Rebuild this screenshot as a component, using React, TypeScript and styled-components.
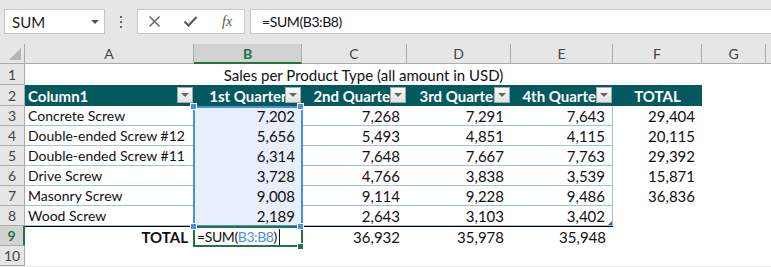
import React from 'react';
import styled, { createGlobalStyle } from 'styled-components';

const GREEN = '#217346';
const TEAL = '#03595d';
const TABLE_LINE = '#9bc2e6';
const SEL_BLUE = '#4a8fe2';

const COLS = [169, 108, 105, 104, 102, 89, 64];
const ROW_H = [21, 21, 20, 20, 20, 20, 20, 20, 20, 20];

const GlobalStyle = createGlobalStyle`
  html, body { margin: 0; padding: 0; background: #e6e6e6; }
  body { font-family: Lato, "Liberation Sans", sans-serif; overflow: hidden; }
`;

const Page = styled.div`
  width: 771px;
  height: 267px;
  background: #e6e6e6;
  overflow: hidden;
`;

const Toolbar = styled.div`
  display: flex;
  align-items: flex-start;
  height: 44px;
  padding: 9px 0 0 4px;
  box-sizing: border-box;
`;

const NameBox = styled.div`
  width: 101px;
  height: 25px;
  box-sizing: border-box;
  background: #fff;
  border: 1px solid #c6c6c6;
  display: flex;
  align-items: center;
  justify-content: space-between;
  padding: 0 5px 0 7px;
  font-size: 15px;
  color: #222;
`;

const Caret = styled.span`
  width: 0;
  height: 0;
  border-left: 4px solid transparent;
  border-right: 4px solid transparent;
  border-top: 4px solid #555;
`;

const Dots = styled.div`
  width: 32px;
  height: 25px;
  display: flex;
  flex-direction: column;
  align-items: center;
  justify-content: center;
  gap: 3px;
  span {
    width: 2px;
    height: 2px;
    background: #666;
  }
`;

const FxBox = styled.div`
  width: 108px;
  height: 25px;
  box-sizing: border-box;
  background: #fff;
  border: 1px solid #c6c6c6;
  display: flex;
  align-items: center;
  padding-left: 10px;
  gap: 22px;
`;

const FxGlyph = styled.span`
  font-family: "Liberation Serif", serif;
  font-style: italic;
  font-size: 14px;
  color: #555;
  margin-left: 2px;
`;

const FormulaText = styled.span`
  font-size: 14px;
  letter-spacing: -0.4px;
`;

const FormulaInput = styled.div`
  flex: 1;
  height: 25px;
  margin-left: 5px;
  box-sizing: border-box;
  background: #fff;
  border: 1px solid #c6c6c6;
  border-right: none;
  display: flex;
  align-items: center;
  padding-left: 11px;
  color: #111;
`;

const Sheet = styled.div`
  position: relative;
  display: grid;
  grid-template-columns: 25px ${COLS.map((c) => c + 'px').join(' ')} 1fr;
  grid-template-rows: 20px ${ROW_H.map((h) => h + 'px').join(' ')};
  background: #fff;
  font-size: 15px;
  color: #111;
`;

const Corner = styled.div`
  background: #e6e6e6;
  border-right: 1px solid #ababab;
  border-bottom: 1px solid #ababab;
  position: relative;
  &::after {
    content: '';
    position: absolute;
    right: 3px;
    bottom: 3px;
    border-left: 12px solid transparent;
    border-bottom: 12px solid #b4b4b4;
  }
`;

const ColHead = styled.div<{ $active?: boolean }>`
  background: ${(p) => (p.$active ? '#d2d2d2' : '#e6e6e6')};
  border-right: 1px solid #ababab;
  border-bottom: ${(p) => (p.$active ? `2px solid ${GREEN}` : '1px solid #ababab')};
  color: ${(p) => (p.$active ? GREEN : '#444')};
  font-weight: ${(p) => (p.$active ? 700 : 400)};
  font-size: 14px;
  display: flex;
  align-items: center;
  justify-content: center;
`;

const RowHead = styled.div<{ $active?: boolean }>`
  background: ${(p) => (p.$active ? '#d2d2d2' : '#e6e6e6')};
  border-right: ${(p) => (p.$active ? `2px solid ${GREEN}` : '1px solid #ababab')};
  border-bottom: 1px solid #ababab;
  color: ${(p) => (p.$active ? GREEN : '#444')};
  font-weight: ${(p) => (p.$active ? 700 : 400)};
  font-size: 14px;
  display: flex;
  align-items: center;
  justify-content: center;
`;

const Cell = styled.div<{
  $right?: boolean;
  $bold?: boolean;
  $head?: boolean;
  $line?: boolean;
  $edge?: boolean;
  $topRule?: boolean;
  $center?: boolean;
  $span?: number;
  $label?: boolean;
}>`
  grid-column: span ${(p) => p.$span || 1};
  display: flex;
  align-items: center;
  justify-content: ${(p) => (p.$center ? 'center' : p.$right ? 'flex-end' : 'flex-start')};
  padding: ${(p) => (p.$right ? '0 7px 0 3px' : '0 3px')};
  box-sizing: border-box;
  white-space: nowrap;
  overflow: hidden;
  font-size: ${(p) => (p.$label ? '14px' : '15px')};
  font-weight: ${(p) => (p.$bold || p.$head ? 700 : 400)};
  background: ${(p) => (p.$head ? TEAL : 'transparent')};
  color: ${(p) => (p.$head ? '#fff' : '#111')};
  border-bottom: ${(p) => (p.$line ? `1px solid ${TABLE_LINE}` : 'none')};
  border-right: ${(p) => (p.$edge ? `1px solid ${TABLE_LINE}` : 'none')};
  border-top: ${(p) => (p.$topRule ? '1px solid #000' : 'none')};
  position: relative;
`;

const HeadLabel = styled.span<{ $left?: boolean }>`
  flex: 1;
  min-width: 0;
  display: flex;
  justify-content: ${(p) => (p.$left ? 'flex-start' : 'center')};
`;

const FilterBtn = styled.span`
  position: absolute;
  right: 1px;
  top: 2px;
  width: 16px;
  height: 16px;
  box-sizing: border-box;
  border: 1px solid #a8a8a8;
  background: linear-gradient(#fafafa, #e2e2e2);
  display: flex;
  align-items: center;
  justify-content: center;
  &::after {
    content: '';
    border-left: 4px solid transparent;
    border-right: 4px solid transparent;
    border-top: 4px solid #666;
  }
`;

const ColFill = styled.div`
  position: absolute;
  left: 194px;
  top: 62px;
  width: 108px;
  height: 120px;
  background: #e8effb;
  pointer-events: none;
`;

const Selection = styled.div<{ $color: string; $top: number; $height: number }>`
  position: absolute;
  left: 193px;
  top: ${(p) => p.$top}px;
  width: 110px;
  height: ${(p) => p.$height}px;
  box-sizing: border-box;
  border: 2px solid ${(p) => p.$color};
  pointer-events: none;
`;

const Handle = styled.span<{ $color: string; $x: number; $y: number }>`
  position: absolute;
  left: ${(p) => p.$x}px;
  top: ${(p) => p.$y}px;
  width: 5px;
  height: 5px;
  background: ${(p) => p.$color};
  border: 1px solid #fff;
`;

const ResizeMark = styled.span`
  position: absolute;
  right: 0;
  bottom: 0;
  border-left: 4px solid transparent;
  border-bottom: 4px solid #3a62b0;
`;

const Ref = styled.span`
  color: ${SEL_BLUE};
`;

const Caretline = styled.span`
  display: inline-block;
  width: 1px;
  height: 16px;
  background: #111;
  margin-left: 2px;
`;

const CellText = styled.span`
  position: relative;
  z-index: 1;
`;

const letters = ['A', 'B', 'C', 'D', 'E', 'F', 'G', ''];

const data: [string, string, string, string, string, string][] = [
  ['Concrete Screw', '7,202', '7,268', '7,291', '7,643', '29,404'],
  ['Double-ended Screw #12', '5,656', '5,493', '4,851', '4,115', '20,115'],
  ['Double-ended Screw #11', '6,314', '7,648', '7,667', '7,763', '29,392'],
  ['Drive Screw', '3,728', '4,766', '3,838', '3,539', '15,871'],
  ['Masonry Screw', '9,008', '9,114', '9,228', '9,486', '36,836'],
  ['Wood Screw', '2,189', '2,643', '3,103', '3,402', ''],
];

const headers = ['Column1', '1st Quarter', '2nd Quarter', '3rd Quarter', '4th Quarter'];

export default function App() {
  return (
    <Page>
      <GlobalStyle />
      <Toolbar>
        <NameBox>
          SUM
          <Caret />
        </NameBox>
        <Dots>
          <span />
          <span />
          <span />
        </Dots>
        <FxBox>
          <svg width="13" height="13" viewBox="0 0 13 13">
            <path d="M1.5 1.5 L11.5 11.5 M11.5 1.5 L1.5 11.5" stroke="#606060" strokeWidth="1.4" fill="none" />
          </svg>
          <svg width="15" height="13" viewBox="0 0 15 13">
            <path d="M1.5 6.5 L5.5 10.5 L13.5 2" stroke="#555" strokeWidth="2" fill="none" />
          </svg>
          <FxGlyph>fx</FxGlyph>
        </FxBox>
        <FormulaInput>
          <FormulaText>=SUM(B3:B8)</FormulaText>
        </FormulaInput>
      </Toolbar>

      <Sheet>
        <Corner />
        {letters.map((l, i) => (
          <ColHead key={i} $active={l === 'B'}>
            {l}
          </ColHead>
        ))}

        <RowHead>1</RowHead>
        <Cell $center $span={6}>
          Sales per Product Type (all amount in USD)
        </Cell>
        <Cell />
        <Cell />

        <RowHead>2</RowHead>
        {headers.map((h, i) => (
          <Cell key={h} $head>
            <HeadLabel $left={i === 0}>{h}</HeadLabel>
            <FilterBtn />
          </Cell>
        ))}
        <Cell $head $center>
          TOTAL
        </Cell>
        <Cell />
        <Cell />

        {data.map((row, r) => (
          <React.Fragment key={r}>
            <RowHead>{r + 3}</RowHead>
            <Cell $line $label>
              {row[0]}
            </Cell>
            <Cell $line $right>
              <CellText>{row[1]}</CellText>
            </Cell>
            <Cell $line $right>
              {row[2]}
            </Cell>
            <Cell $line $right>
              {row[3]}
            </Cell>
            <Cell $line $right $edge>
              {row[4]}
              {r === 5 && <ResizeMark />}
            </Cell>
            <Cell $right>{row[5]}</Cell>
            <Cell />
            <Cell />
          </React.Fragment>
        ))}

        <RowHead $active>9</RowHead>
        <Cell $right $bold $topRule style={{ paddingRight: 6 }}>
          TOTAL
        </Cell>
        <Cell $topRule style={{ paddingLeft: 3 }}>
          <FormulaText>
            =SUM(<Ref>B3:B8</Ref>)
          </FormulaText>
          <Caretline />
        </Cell>
        <Cell $right $topRule>
          36,932
        </Cell>
        <Cell $right $topRule>
          35,978
        </Cell>
        <Cell $right $topRule>
          35,948
        </Cell>
        <Cell />
        <Cell />
        <Cell />

        <RowHead>10</RowHead>
        <Cell />
        <Cell />
        <Cell />
        <Cell />
        <Cell />
        <Cell />
        <Cell />
        <Cell />

        <ColFill />
        <Selection $color={SEL_BLUE} $top={62} $height={121}>
          <Handle $color={SEL_BLUE} $x={-5} $y={-5} />
          <Handle $color={SEL_BLUE} $x={102} $y={-5} />
        </Selection>
        <Selection $color={GREEN} $top={182} $height={21}>
          <Handle $color={SEL_BLUE} $x={-5} $y={-5} />
          <Handle $color={SEL_BLUE} $x={102} $y={-5} />
          <Handle $color={GREEN} $x={102} $y={15} />
        </Selection>
      </Sheet>
    </Page>
  );
}
